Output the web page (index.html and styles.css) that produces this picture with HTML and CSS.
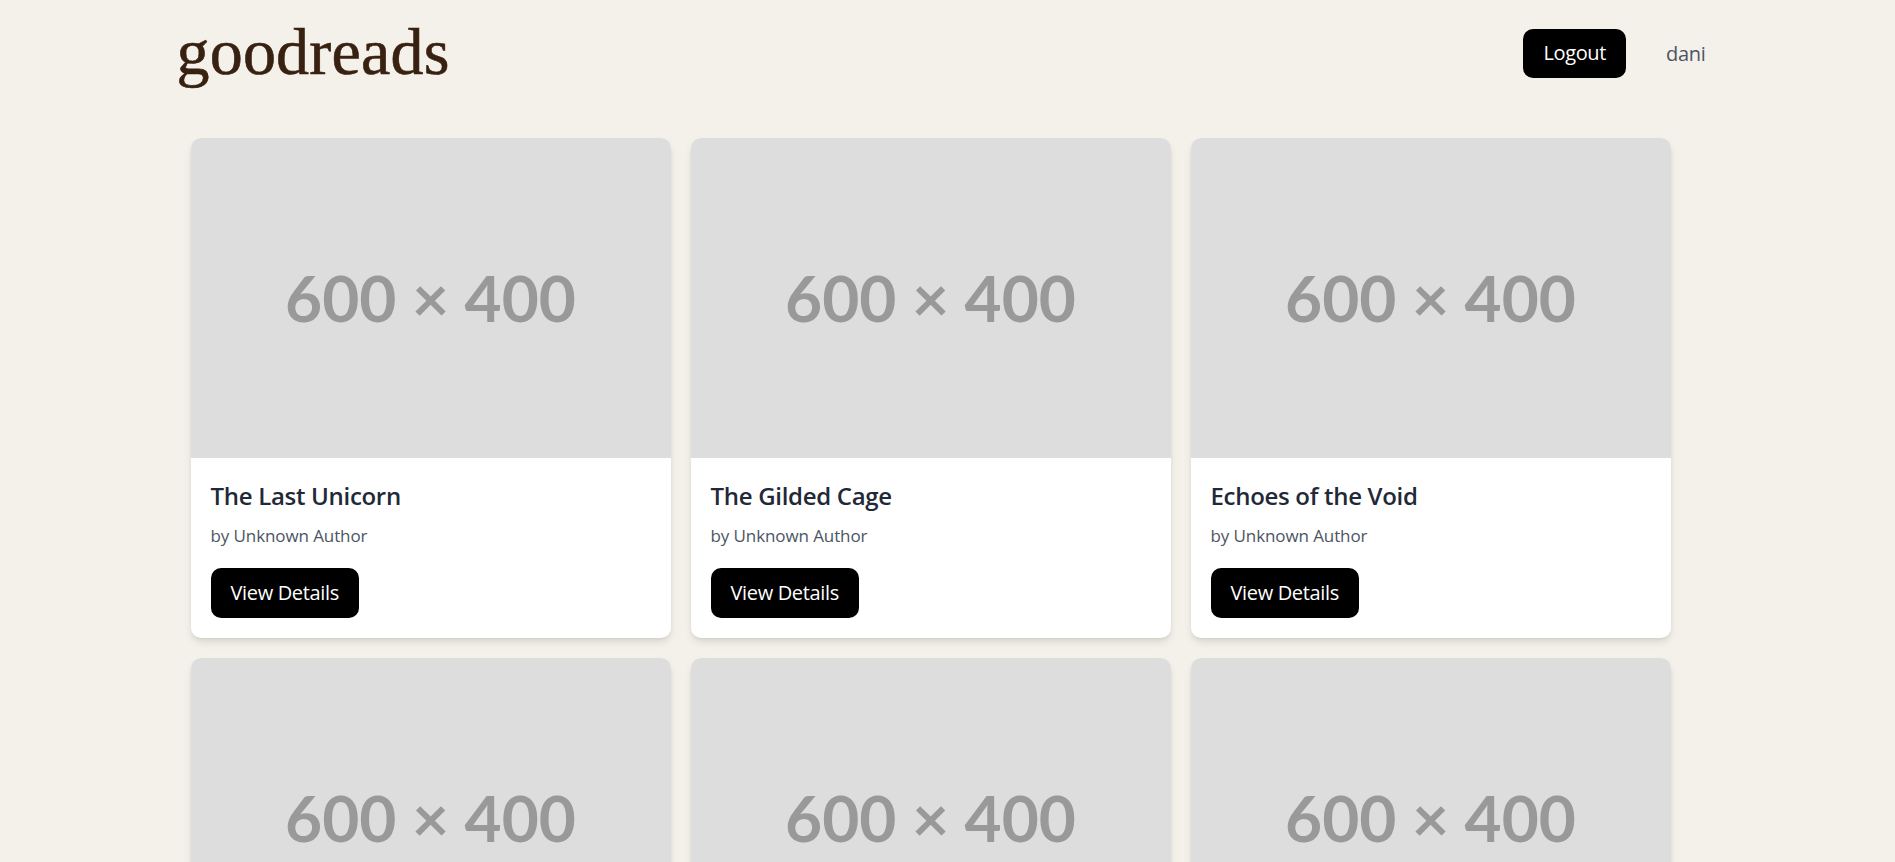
FILE: index.html
```html
<!DOCTYPE html>
<html lang="en">
<head>
<meta charset="utf-8">
<title>goodreads</title>
<link rel="stylesheet" href="styles.css">
</head>
<body>
<header class="site-header">
  <a class="logo" href="#">goodreads</a>
  <nav class="user-nav">
    <button class="btn btn-logout">Logout</button>
    <span class="username">dani</span>
  </nav>
</header>
<main class="books">
  <article class="card">
    <div class="cover"><span>600 × 400</span></div>
    <div class="card-body">
      <h2 class="title">The Last Unicorn</h2>
      <p class="author">by Unknown Author</p>
      <button class="btn">View Details</button>
    </div>
  </article>
  <article class="card">
    <div class="cover"><span>600 × 400</span></div>
    <div class="card-body">
      <h2 class="title">The Gilded Cage</h2>
      <p class="author">by Unknown Author</p>
      <button class="btn">View Details</button>
    </div>
  </article>
  <article class="card">
    <div class="cover"><span>600 × 400</span></div>
    <div class="card-body">
      <h2 class="title">Echoes of the Void</h2>
      <p class="author">by Unknown Author</p>
      <button class="btn">View Details</button>
    </div>
  </article>
  <article class="card">
    <div class="cover"><span>600 × 400</span></div>
    <div class="card-body">
      <h2 class="title">Whispers in the Dark</h2>
      <p class="author">by Unknown Author</p>
      <button class="btn">View Details</button>
    </div>
  </article>
  <article class="card">
    <div class="cover"><span>600 × 400</span></div>
    <div class="card-body">
      <h2 class="title">The Silent Sea</h2>
      <p class="author">by Unknown Author</p>
      <button class="btn">View Details</button>
    </div>
  </article>
  <article class="card">
    <div class="cover"><span>600 × 400</span></div>
    <div class="card-body">
      <h2 class="title">Beyond the Stars</h2>
      <p class="author">by Unknown Author</p>
      <button class="btn">View Details</button>
    </div>
  </article>
</main>
</body>
</html>
```
FILE: styles.css
```css
* { box-sizing: border-box; }

body {
  margin: 0;
  background: #f4f1ea;
  font-family: "Open Sans", "Noto Sans", sans-serif;
  color: #111827;
}

.site-header {
  max-width: 1600px;
  margin: 0 auto;
  padding: 15px 30px 0 29px;
  height: 113px;
  display: flex;
  justify-content: space-between;
  align-items: flex-start;
}

.logo {
  font-family: "Liberation Serif", "DejaVu Serif", serif;
  font-size: 66px;
  line-height: 74px;
  letter-spacing: 0.2px;
  color: #382110;
  -webkit-text-stroke: 0.6px #382110;
  text-decoration: none;
}

.user-nav {
  display: flex;
  align-items: center;
  gap: 40px;
  padding-top: 14px;
}

.btn {
  display: inline-block;
  border: 0;
  background: #000;
  color: #fff;
  font-family: inherit;
  font-size: 20px;
  line-height: 30px;
  letter-spacing: -0.35px;
  padding: 10px 20px;
  border-radius: 10px;
  cursor: pointer;
}

.btn-logout { padding: 9px 20px 10px; }

.username {
  font-size: 20px;
  line-height: 30px;
  letter-spacing: -0.3px;
  color: #4b5563;
  padding-right: 12px;
}

.books {
  max-width: 1600px;
  margin: 0 auto;
  padding: 25px 0 40px 43px;
  display: grid;
  grid-template-columns: repeat(3, 480px);
  gap: 20px;
}

.card {
  background: #fff;
  border-radius: 10px;
  overflow: hidden;
  box-shadow: 0 5px 8px -1px rgba(0,0,0,0.1), 0 2px 5px -2px rgba(0,0,0,0.1);
}

.cover {
  height: 320px;
  background: #dddddd;
  display: flex;
  align-items: center;
  justify-content: center;
}

.cover span {
  font-family: Lato, sans-serif;
  font-weight: 700;
  font-size: 64px;
  color: #999999;
  line-height: 1;
}

.card-body {
  padding: 20px;
}

.title {
  margin: 0;
  font-size: 24px;
  line-height: 35px;
  letter-spacing: -0.3px;
  font-weight: 600;
  color: #1f2937;
}

.author {
  margin: 10px 0 20px;
  font-size: 17px;
  line-height: 25px;
  letter-spacing: -0.1px;
  color: #4b5563;
}
```
